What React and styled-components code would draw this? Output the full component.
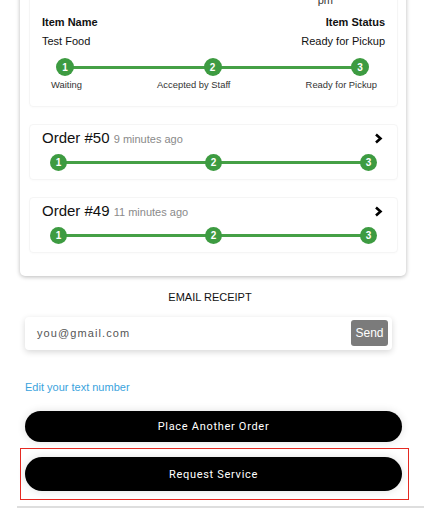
import React from "react";
import styled, { createGlobalStyle } from "styled-components";

const colours = {
  green: "#3d9b41",
  line: "#45a046",
  text: "#111",
  gray: "#8a8a8a",
  link: "#3aa3dd",
  send: "#7b7b7b",
};

const GlobalStyle = createGlobalStyle`
  body {
    margin: 0;
    background: #fff;
    font-family: "Liberation Sans", Arial, sans-serif;
    color: ${colours.text};
  }
`;

const Page = styled.div`
  display: flex;
  flex-direction: column;
  width: 424px;
  height: 512px;
  overflow: hidden;
`;

const Card = styled.div`
  margin: -8px 18px 0 20px;
  padding: 0 8px 23px 9px;
  background: #fff;
  border-radius: 0 0 5px 5px;
  box-shadow: 0 1px 4px rgba(0, 0, 0, 0.28);
  display: flex;
  flex-direction: column;
  gap: 17px;
`;

const Section = styled.div`
  border: 1px solid #f5f5f5;
  border-radius: 4px;
  box-shadow: 0 1px 2px rgba(0, 0, 0, 0.02);
  padding: ${(p) => p.pad};
`;

const PmRow = styled.div`
  display: flex;
  justify-content: flex-end;
  padding-right: 64px;
  font-size: 11px;
  line-height: 14px;
  color: #333;
`;

const ItemGrid = styled.div`
  display: grid;
  grid-template-columns: 1fr 1fr;
  row-gap: 5px;
  padding: 0 12px;
  margin-top: 8px;
  font-size: 11px;
  line-height: 14px;
`;

const Cell = styled.div`
  text-align: ${(p) => (p.right ? "right" : "left")};
  font-weight: ${(p) => (p.bold ? 700 : 400)};
`;

const Track = styled.div`
  position: relative;
  display: flex;
  justify-content: space-between;
  align-items: center;
  margin: ${(p) => p.margin};
`;

const TrackLine = styled.div`
  position: absolute;
  left: 6px;
  right: 6px;
  top: 50%;
  height: 3px;
  margin-top: -1.5px;
  background: ${colours.line};
`;

const Dot = styled.div`
  position: relative;
  width: ${(p) => p.size}px;
  height: ${(p) => p.size}px;
  border-radius: 50%;
  background: ${colours.green};
  color: #fff;
  font-size: 10px;
  font-weight: 700;
  display: flex;
  align-items: center;
  justify-content: center;
`;

const StepLabels = styled.div`
  display: flex;
  justify-content: space-between;
  padding: 0 20px 0 21px;
  margin-top: 3px;
  font-size: 9.4px;
  line-height: 12px;
  color: #333;
`;

const OrderHead = styled.div`
  display: flex;
  align-items: center;
  justify-content: space-between;
  padding: 0 14px 0 12px;
  height: 18px;
`;

const OrderTitle = styled.div`
  font-size: 15px;
  line-height: 18px;
  span {
    font-size: 11px;
    color: ${colours.gray};
  }
`;

const EmailTitle = styled.div`
  margin-top: 14px;
  text-align: center;
  font-size: 11px;
  line-height: 14px;
  padding-right: 4px;
`;

const EmailBox = styled.div`
  margin: 13px 32px 0 25px;
  height: 35px;
  display: flex;
  align-items: center;
  justify-content: space-between;
  padding: 0 4px 0 12px;
  border-radius: 4px;
  background: #fff;
  box-shadow: 0 2px 6px rgba(0, 0, 0, 0.16);
`;

const Placeholder = styled.div`
  font-size: 11px;
  letter-spacing: 1.1px;
  color: #555;
`;

const SendButton = styled.div`
  width: 37px;
  height: 26px;
  border-radius: 3px;
  background: ${colours.send};
  color: #fff;
  font-size: 12px;
  display: flex;
  align-items: center;
  justify-content: center;
`;

const EditLink = styled.div`
  margin: 30px 0 0 25px;
  font-size: 11px;
  line-height: 14px;
  color: ${colours.link};
`;

const PillButton = styled.div`
  height: 34px;
  border-radius: 17px;
  background: #000;
  color: #fff;
  font-family: Roboto, "Liberation Sans", sans-serif;
  font-size: 11px;
  font-weight: 400;
  letter-spacing: 0.7px;
  display: flex;
  align-items: center;
  justify-content: center;
  box-shadow: 0 0 8px rgba(0, 0, 0, 0.12);
  margin: ${(p) => p.margin || "0"};
`;

const Highlight = styled.div`
  margin: 6px 15px 0 20px;
  padding: 8px 6px 8px 4px;
  border: 1px solid #e52a22;
`;

const Footer = styled.div`
  margin: 6px 0 0 17px;
  height: 4px;
  border-top: 2px solid #dedede;
`;

const Chevron = () => (
  <svg width="9" height="11" viewBox="0 0 9 11">
    <path d="M2 1.5 L6.5 5.5 L2 9.5" fill="none" stroke="#000" strokeWidth="2.6" />
  </svg>
);

const Steps = ({ size, margin }) => (
  <Track margin={margin}>
    <TrackLine />
    {[1, 2, 3].map((n) => (
      <Dot key={n} size={size}>{n}</Dot>
    ))}
  </Track>
);

const OrderRow = ({ number, ago }) => (
  <Section pad="4px 0 8px 0">
    <OrderHead>
      <OrderTitle>
        Order #{number} <span>{ago}</span>
      </OrderTitle>
      <Chevron />
    </OrderHead>
    <Steps size={17} margin="7px 20px 0 20px" />
  </Section>
);

const App = () => (
  <Page>
    <GlobalStyle />
    <Card>
      <Section pad="0 0 15px 0">
        <PmRow>pm</PmRow>
        <ItemGrid>
          <Cell bold>Item Name</Cell>
          <Cell bold right>Item Status</Cell>
          <Cell>Test Food</Cell>
          <Cell right>Ready for Pickup</Cell>
        </ItemGrid>
        <Steps size={18} margin="10px 28px 0 26px" />
        <StepLabels>
          <span>Waiting</span>
          <span>Accepted by Staff</span>
          <span>Ready for Pickup</span>
        </StepLabels>
      </Section>
      <OrderRow number={50} ago="9 minutes ago" />
      <OrderRow number={49} ago="11 minutes ago" />
    </Card>
    <EmailTitle>EMAIL RECEIPT</EmailTitle>
    <EmailBox>
      <Placeholder>you@gmail.com</Placeholder>
      <SendButton>Send</SendButton>
    </EmailBox>
    <EditLink>Edit your text number</EditLink>
    <PillButton margin="17px 22px 0 25px">Place Another Order</PillButton>
    <Highlight>
      <PillButton>Request Service</PillButton>
    </Highlight>
    <Footer />
  </Page>
);

export default App;
